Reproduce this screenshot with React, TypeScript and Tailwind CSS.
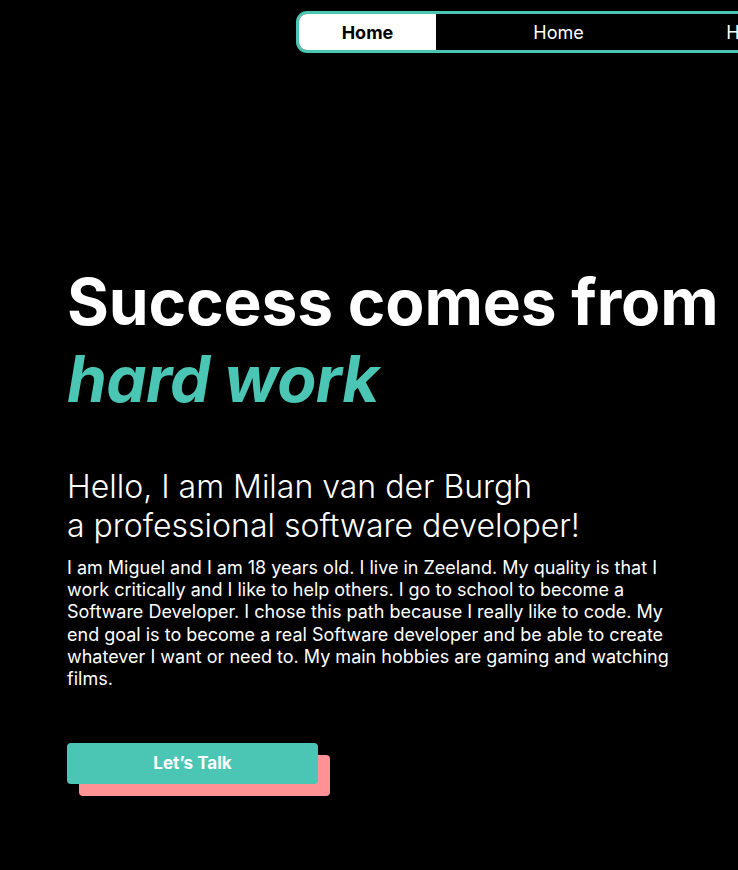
import React from "react";

const tabs = ["Home", "Home", "Home"];

export default function App() {
  return (
    <div className="min-h-[870px] w-[738px] overflow-hidden bg-black font-['Inter',sans-serif] text-white">
      {/* Nav */}
      <div className="flex pt-[11px] pl-[296px]">
        <nav className="flex h-[42px] w-[700px] shrink-0 rounded-[11px] border-[3px] border-[#4bc6b5] bg-black">
          <div className="flex w-[137px] shrink-0 items-center justify-center rounded-l-[8px] bg-white text-[18px] font-bold text-black">
            {tabs[0]}
          </div>
          <div className="w-[26px] shrink-0" />
          {tabs.slice(1).map((t, i) => (
            <div key={i} className="flex w-[193px] shrink-0 items-center justify-center text-[18px] text-white">
              {t}
            </div>
          ))}
        </nav>
      </div>

      {/* Hero */}
      <section className="pl-[67px] pt-[210px]">
        <h1 className="text-[64px] font-bold leading-[77px] tracking-[-0.15px]">
          Success comes from
          <br />
          <span className="italic tracking-[-0.6px] text-[#4bc6b5]">hard work</span>
        </h1>
        <h2 className="mt-[50px] text-[32px] font-light leading-[39px]">
          Hello, I am Milan van der Burgh
          <br />
          a professional software developer!
        </h2>
        <p className="mt-[12px] w-[612px] text-[18px] leading-[22.2px]">
          I am Miguel and I am 18 years old. I live in Zeeland. My quality is that I work critically and I like to help others. I go to school to become a Software Developer. I chose this path because I really like to code. My end goal is to become a real Software developer and be able to create whatever I want or need to. My main hobbies are gaming and watching films.
        </p>
        <div className="relative mt-[53px] h-[53px] w-[263px]">
          <div className="absolute left-[12px] top-[12px] h-[41px] w-[251px] rounded-[4px] bg-[#ff9295]" />
          <button className="absolute left-0 top-0 flex h-[41px] w-[251px] items-center justify-center rounded-[4px] bg-[#4bc6b5] text-[17px] font-bold text-white">
            Let’s Talk
          </button>
        </div>
      </section>
    </div>
  );
}
